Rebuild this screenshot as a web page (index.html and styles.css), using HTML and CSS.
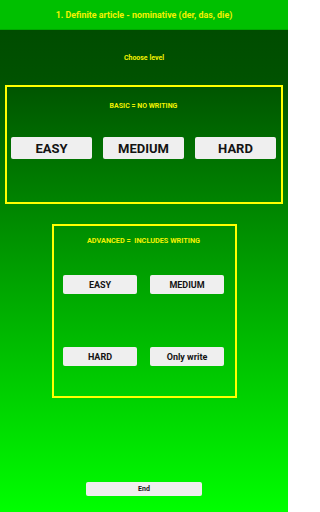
FILE: index.html
```html
<!DOCTYPE html>
<html>
<head>
<meta charset="utf-8">
<link rel="stylesheet" href="styles.css">
</head>
<body>
<header class="topbar">1. Definite article - nominative (der, das, die)</header>
<main class="content">
  <div class="choose">Choose level</div>
  <section class="box basic">
    <div class="label">BASIC = NO WRITING</div>
    <div class="row3">
      <button class="btn big">EASY</button>
      <button class="btn big">MEDIUM</button>
      <button class="btn big">HARD</button>
    </div>
  </section>
  <section class="box advanced">
    <div class="label wide">ADVANCED =&nbsp; INCLUDES WRITING</div>
    <div class="grid2">
      <button class="btn mid">EASY</button>
      <button class="btn mid">MEDIUM</button>
      <button class="btn mid">HARD</button>
      <button class="btn mid">Only write</button>
    </div>
  </section>
  <div class="spacer"></div>
  <button class="btn end">End</button>
</main>
</body>
</html>
```
FILE: styles.css
```css
* { box-sizing: border-box; }
html, body { margin: 0; padding: 0; }
body {
  width: 288px;
  height: 512px;
  font-family: Roboto, "Liberation Sans", sans-serif;
  display: flex;
  flex-direction: column;
  overflow: hidden;
}
.topbar {
  height: 30px;
  flex: none;
  background: #00c000;
  color: #f2f200;
  font-weight: bold;
  font-size: 8.9px;
  display: flex;
  align-items: center;
  justify-content: center;
  border-bottom: 1px solid #00a800;
}
.content {
  flex: 1;
  background: linear-gradient(#004c00 0%, #005200 10%, #00ff00 100%);
  display: flex;
  flex-direction: column;
  align-items: center;
  padding-top: 24px;
}
.choose {
  color: #f2f200;
  font-weight: bold;
  font-size: 7px;
  line-height: 8px;
  height: 8px;
}
.box {
  border: 2px solid #ffff00;
}
.label {
  color: #f2f200;
  font-weight: bold;
  font-size: 7px;
  line-height: 8px;
  text-align: center;
}
.label.wide { font-size: 7.3px; }
.basic {
  margin-top: 23px;
  width: 278px;
  height: 119px;
  padding: 15px 5px 0 4px;
}
.row3 {
  margin-top: 27px;
  display: flex;
  gap: 11px;
}
.btn {
  border: none;
  background: #efefef;
  border-radius: 2px;
  color: #131313;
  font-family: Roboto, "Liberation Sans", sans-serif;
  font-weight: bold;
  padding: 0;
  display: flex;
  align-items: center;
  justify-content: center;
}
.big {
  width: 81px;
  height: 22px;
  font-size: 13px;
}
.advanced {
  margin-top: 20px;
  width: 185px;
  height: 174px;
  padding: 11px 11px 0 9px;
  margin-left: 1px;
}
.grid2 {
  margin-top: 30px;
  display: grid;
  grid-template-columns: 74px 74px;
  column-gap: 13px;
  row-gap: 53px;
}
.mid {
  height: 19px;
  font-size: 9px;
}
.spacer { flex: 1; }
.end {
  width: 116px;
  height: 14px;
  font-size: 7px;
  margin-bottom: 16px;
}
```
